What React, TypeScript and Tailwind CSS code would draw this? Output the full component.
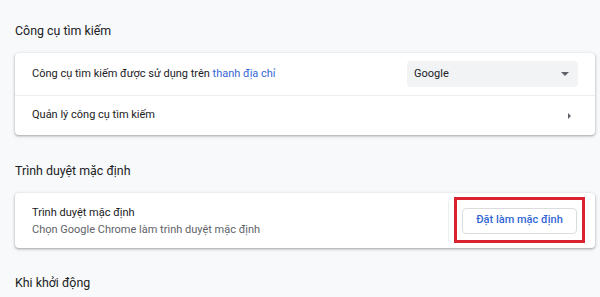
export default function App() {
  return (
    <div className="min-h-[297px] w-[600px] overflow-hidden bg-[#f8f9fa] pl-[15px] pr-[5px] pt-[21px] font-['Roboto',sans-serif] text-[11px] text-[#202124]">
      {/* Search engine */}
      <h2 className="flex h-5 items-center text-[12.4px] text-[#202124]">Công cụ tìm kiếm</h2>
      <div className="mt-3 rounded-[4px] bg-white shadow-[0_1px_2px_rgba(60,64,67,0.3),0_1px_3px_1px_rgba(60,64,67,0.15)]">
        <div className="flex h-[42px] items-center pl-[17px] pr-[17px]">
          <span className="flex-1">
            Công cụ tìm kiếm được sử dụng trên <span className="text-[#3367d6]">thanh địa chỉ</span>
          </span>
          <div className="flex h-[26px] w-[171px] items-center justify-between rounded-[4px] bg-[#f1f3f4] pl-[7px] pr-[9px]">
            <span>Google</span>
            <svg width="8" height="4" viewBox="0 0 8 4">
              <path d="M0 0h8L4 4z" fill="#5f6368" />
            </svg>
          </div>
        </div>
        <div className="flex h-10 items-center border-t border-[#eceef0] pl-[17px] pr-[24px]">
          <span className="flex-1">Quản lý công cụ tìm kiếm</span>
          <svg width="3" height="6" viewBox="0 0 3 6">
            <path d="M0 0l3 3-3 3z" fill="#5f6368" />
          </svg>
        </div>
      </div>

      {/* Default browser */}
      <h2 className="mt-[26px] flex h-5 items-center text-[12.4px] text-[#202124]">Trình duyệt mặc định</h2>
      <div className="mt-3 flex h-[55px] items-center rounded-[4px] bg-white pl-[17px] pr-[18px] shadow-[0_1px_2px_rgba(60,64,67,0.3),0_1px_3px_1px_rgba(60,64,67,0.15)]">
        <div className="flex flex-1 flex-col">
          <span className="leading-[17px]">Trình duyệt mặc định</span>
          <span className="leading-[17px] text-[#5f6368]">Chọn Google Chrome làm trình duyệt mặc định</span>
        </div>
        <div className="h-10 w-px bg-[#eceef0]" />
        <div className="relative ml-[13px]">
          <button className="flex h-[26px] w-[115px] items-center justify-center rounded-[4px] border border-[#dadce0] bg-white text-[11px] font-medium text-[#3367d6]">
            Đặt làm mặc định
          </button>
          <div className="absolute -inset-x-[8px] -bottom-[9px] -top-[11px] border-[3px] border-[#d9232e]" />
        </div>
      </div>

      {/* On startup */}
      <h2 className="mt-[25px] flex h-5 items-center text-[12.4px] text-[#202124]">Khi khởi động</h2>
    </div>
  )
}
